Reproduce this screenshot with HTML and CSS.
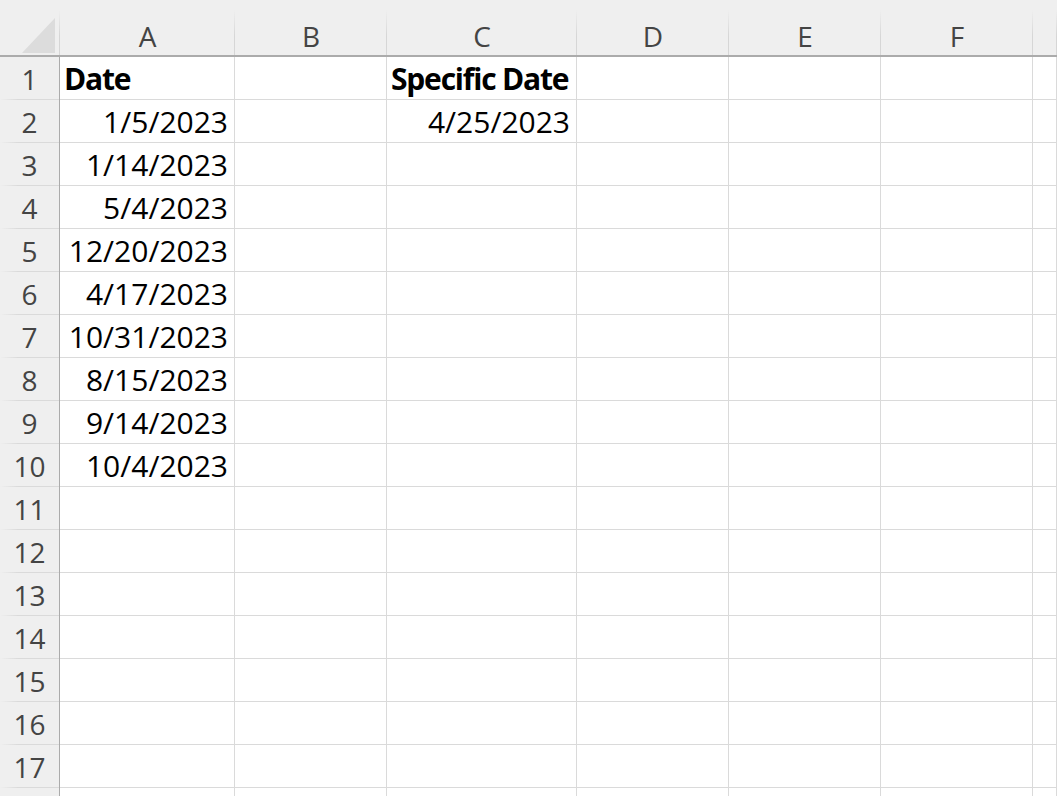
FILE: index.html
```html
<!DOCTYPE html>
<html lang="en">
<head>
    <meta charset="UTF-8">
    <title>Sheet1</title>
    <link rel="stylesheet" href="styles.css">
</head>
<body>
    <div class="sheet">
        <div class="corner">
            <svg width="59" height="55" viewBox="0 0 59 55"><polygon points="22,53 55,18 55,53" fill="#dcdcdc"/></svg>
        </div>
        <div class="col-head">A</div>
        <div class="col-head">B</div>
        <div class="col-head">C</div>
        <div class="col-head">D</div>
        <div class="col-head">E</div>
        <div class="col-head">F</div>
        <div class="col-head"></div>

        <div class="row-head">1</div><div class="cell bold">Date</div><div class="cell"></div><div class="cell bold">Specific Date</div><div class="cell"></div><div class="cell"></div><div class="cell"></div><div class="cell"></div>
        <div class="row-head">2</div><div class="cell num">1/5/2023</div><div class="cell"></div><div class="cell num">4/25/2023</div><div class="cell"></div><div class="cell"></div><div class="cell"></div><div class="cell"></div>
        <div class="row-head">3</div><div class="cell num">1/14/2023</div><div class="cell"></div><div class="cell"></div><div class="cell"></div><div class="cell"></div><div class="cell"></div><div class="cell"></div>
        <div class="row-head">4</div><div class="cell num">5/4/2023</div><div class="cell"></div><div class="cell"></div><div class="cell"></div><div class="cell"></div><div class="cell"></div><div class="cell"></div>
        <div class="row-head">5</div><div class="cell num">12/20/2023</div><div class="cell"></div><div class="cell"></div><div class="cell"></div><div class="cell"></div><div class="cell"></div><div class="cell"></div>
        <div class="row-head">6</div><div class="cell num">4/17/2023</div><div class="cell"></div><div class="cell"></div><div class="cell"></div><div class="cell"></div><div class="cell"></div><div class="cell"></div>
        <div class="row-head">7</div><div class="cell num">10/31/2023</div><div class="cell"></div><div class="cell"></div><div class="cell"></div><div class="cell"></div><div class="cell"></div><div class="cell"></div>
        <div class="row-head">8</div><div class="cell num">8/15/2023</div><div class="cell"></div><div class="cell"></div><div class="cell"></div><div class="cell"></div><div class="cell"></div><div class="cell"></div>
        <div class="row-head">9</div><div class="cell num">9/14/2023</div><div class="cell"></div><div class="cell"></div><div class="cell"></div><div class="cell"></div><div class="cell"></div><div class="cell"></div>
        <div class="row-head">10</div><div class="cell num">10/4/2023</div><div class="cell"></div><div class="cell"></div><div class="cell"></div><div class="cell"></div><div class="cell"></div><div class="cell"></div>
        <div class="row-head">11</div><div class="cell"></div><div class="cell"></div><div class="cell"></div><div class="cell"></div><div class="cell"></div><div class="cell"></div><div class="cell"></div>
        <div class="row-head">12</div><div class="cell"></div><div class="cell"></div><div class="cell"></div><div class="cell"></div><div class="cell"></div><div class="cell"></div><div class="cell"></div>
        <div class="row-head">13</div><div class="cell"></div><div class="cell"></div><div class="cell"></div><div class="cell"></div><div class="cell"></div><div class="cell"></div><div class="cell"></div>
        <div class="row-head">14</div><div class="cell"></div><div class="cell"></div><div class="cell"></div><div class="cell"></div><div class="cell"></div><div class="cell"></div><div class="cell"></div>
        <div class="row-head">15</div><div class="cell"></div><div class="cell"></div><div class="cell"></div><div class="cell"></div><div class="cell"></div><div class="cell"></div><div class="cell"></div>
        <div class="row-head">16</div><div class="cell"></div><div class="cell"></div><div class="cell"></div><div class="cell"></div><div class="cell"></div><div class="cell"></div><div class="cell"></div>
        <div class="row-head">17</div><div class="cell"></div><div class="cell"></div><div class="cell"></div><div class="cell"></div><div class="cell"></div><div class="cell"></div><div class="cell"></div>
        <div class="row-head"></div><div class="cell"></div><div class="cell"></div><div class="cell"></div><div class="cell"></div><div class="cell"></div><div class="cell"></div><div class="cell"></div>
    </div>
</body>
</html>
```

FILE: styles.css
```css
body {
    margin: 0;
    overflow: hidden;
    background-color: white;
    font-family: "Open Sans", "Noto Sans", sans-serif;
}
.sheet {
    display: grid;
    grid-template-columns: 60px 175px 152px 190px 152px 152px 152px 1fr;
    grid-template-rows: 57px;
    grid-auto-rows: 43px;
}
.corner,
.col-head {
    box-sizing: border-box;
    border-bottom: 2px solid #ababab;
    background: linear-gradient(to bottom, rgba(214,214,214,0) 10px, #d6d6d6 36px) right top / 1px 100% no-repeat, #efefef;
}
.corner svg {
    display: block;
}
.col-head {
    padding-top: 17px;
    line-height: 38px;
    font-size: 28px;
    color: #444;
    text-align: center;
}
.row-head {
    box-sizing: border-box;
    border-right: 1px solid #ababab;
    background: linear-gradient(to right, rgba(218,218,218,0), #dadada 18px) left bottom / 100% 1px no-repeat, #efefef;
    font-size: 28px;
    line-height: 44px;
    color: #444;
    text-align: center;
}
.cell {
    box-sizing: border-box;
    border-right: 1px solid #dadada;
    border-bottom: 1px solid #dadada;
    padding: 1px 6px 0 4px;
    font-size: 30px;
    line-height: 42px;
    color: black;
    white-space: nowrap;
}
.num {
    text-align: right;
}
.bold {
    font-weight: bold;
    letter-spacing: -1.2px;
}
```
